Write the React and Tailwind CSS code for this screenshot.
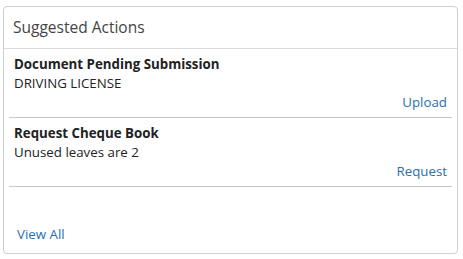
import React from "react";

const actions = [
  { title: "Document Pending Submission", detail: "DRIVING LICENSE", link: "Upload" },
  { title: "Request Cheque Book", detail: "Unused leaves are 2", link: "Request" },
];

const App = () => {
  return (
    <div
      className="w-[463px] h-[259px] bg-white pl-[3px] pt-[6px]"
      style={{ fontFamily: '"Open Sans", "Noto Sans", sans-serif' }}
    >
      <div className="w-[455px] h-[248px] border border-[#cfcfcf] rounded-[4px] flex flex-col text-[#333]">
        <div className="h-[42px] border-b border-[#dcdcdc] flex items-center px-[9px] text-[15.5px] text-[#444]">
          Suggested Actions
        </div>
        <div className="px-[5px] flex-1 flex flex-col">
          {actions.map((a) => (
            <div key={a.title} className="border-b border-[#c8c8c8] pt-[6px] pb-[5px] px-[5px]">
              <div className="text-[13.3px] font-bold leading-[19px] text-[#222]">{a.title}</div>
              <div className="text-[13.3px] leading-[19px] text-[#222]">{a.detail}</div>
              <div className="text-[13.3px] leading-[19px] text-right">
                <a className="text-[#2a6fad]">{a.link}</a>
              </div>
            </div>
          ))}
          <div className="mt-auto pb-[9px] px-[8px] text-[13.3px] leading-[19px]">
            <a className="text-[#2a6fad]">View All</a>
          </div>
        </div>
      </div>
    </div>
  );
};

export default App;
